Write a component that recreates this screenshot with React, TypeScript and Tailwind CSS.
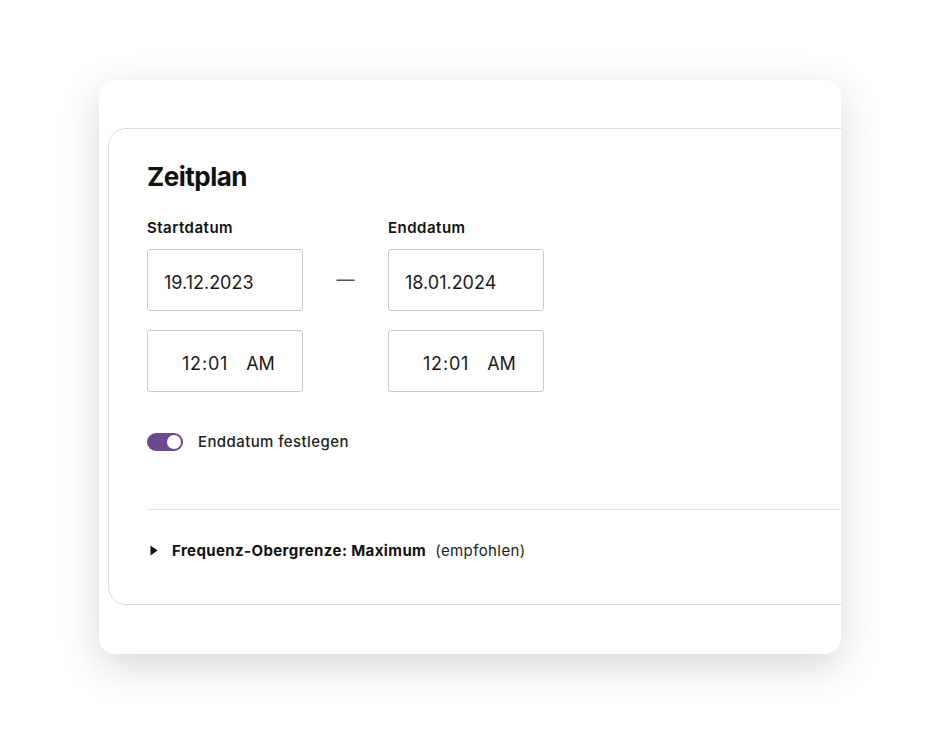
export default function App() {
  return (
    <div
      className="min-h-[734px] w-[940px] bg-white pl-[99px] pt-[80px]"
      style={{ fontFamily: 'Inter, "Noto Sans", sans-serif' }}
    >
      <div className="h-[574px] w-[742px] overflow-hidden rounded-2xl bg-white shadow-[0_12px_40px_rgba(0,0,0,0.16)]">
        <div className="ml-[9px] mt-[48px] h-[477px] w-[820px] rounded-[18px] border border-[#dedede] pl-[38px] pt-[32px] text-[#111]">
          <h2 className="text-[26px] font-bold leading-8 tracking-[-0.5px]">Zeitplan</h2>

          <div className="mt-[25px] flex items-start">
            <div>
              <div className="text-[15px] font-semibold leading-5 tracking-[0.5px]">Startdatum</div>
              <Field className="mt-[11px] pl-[16px]">19.12.2023</Field>
              <Field className="mt-[19px] pl-[34px]">
                <span className="tracking-[0.8px]">12:01</span>
                <span className="ml-[18px]">AM</span>
              </Field>
            </div>
            <div className="flex w-[85px] justify-center pt-[31px]">
              <span className="text-[18px] leading-[62px] text-[#555]">—</span>
            </div>
            <div>
              <div className="text-[15px] font-semibold leading-5 tracking-[0.5px]">Enddatum</div>
              <Field className="mt-[11px] pl-[16px]">18.01.2024</Field>
              <Field className="mt-[19px] pl-[34px]">
                <span className="tracking-[0.8px]">12:01</span>
                <span className="ml-[18px]">AM</span>
              </Field>
            </div>
          </div>

          <div className="mt-[39px] flex items-center gap-[15px]">
            <div className="flex h-[18px] w-[36px] items-center justify-end rounded-full bg-[#6a4a8e] pr-[2px]">
              <div className="h-[14px] w-[14px] rounded-full bg-white" />
            </div>
            <span className="text-[15px] font-medium tracking-[0.4px] text-[#222]">Enddatum festlegen</span>
          </div>

          <div className="mt-[55px] border-t border-[#e2e2e2]" />

          <div className="mt-[31px] flex items-center text-[15px] leading-5 tracking-[0.4px]">
            <svg width="8" height="11" viewBox="0 0 8 11" className="ml-[3px] mr-[14px]">
              <path d="M0.5 0.5 L7.5 5.5 L0.5 10.5 Z" fill="#111" />
            </svg>
            <span className="font-bold">Frequenz-Obergrenze: Maximum</span>
            <span className="ml-[9px] text-[#222]">(empfohlen)</span>
          </div>
        </div>
      </div>
    </div>
  )
}

function Field({ children, className = '' }: { children: React.ReactNode; className?: string }) {
  return (
    <div
      className={`flex h-[62px] w-[156px] items-center rounded-[3px] border border-[#c9c9c9] bg-white pt-[5px] text-[18px] text-[#1a1a1a] ${className}`}
    >
      {children}
    </div>
  )
}
